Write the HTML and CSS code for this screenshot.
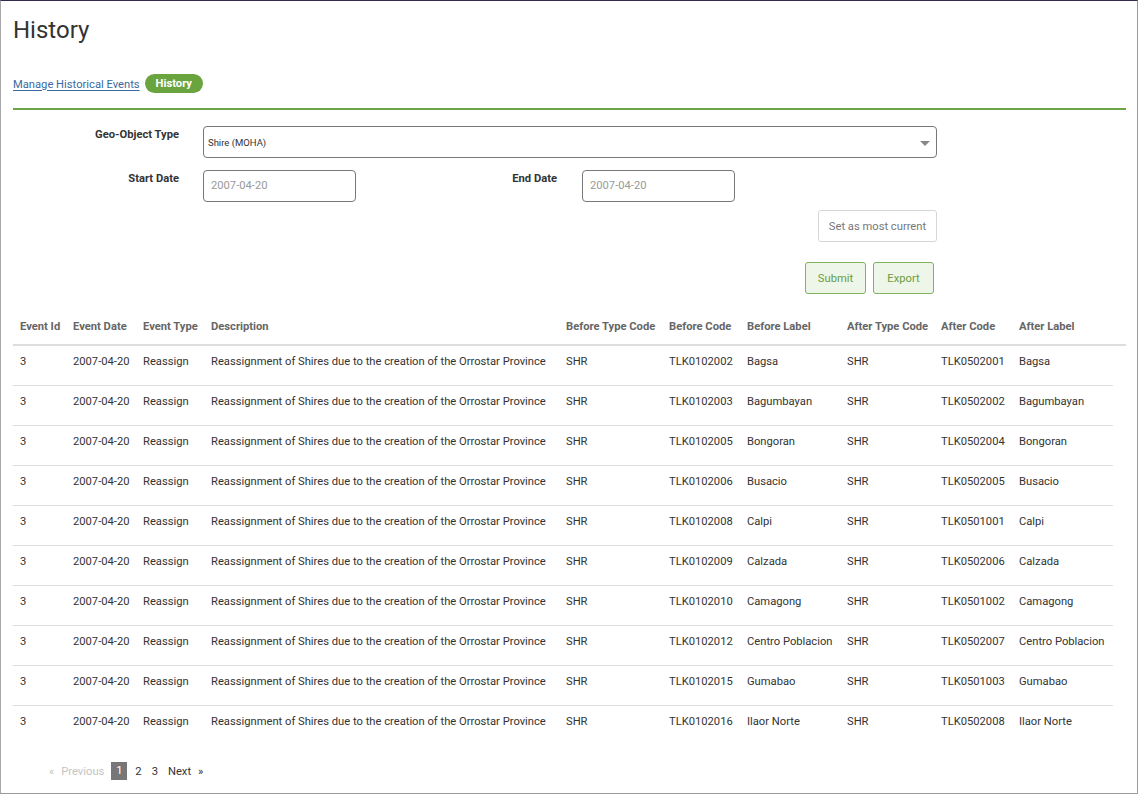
FILE: index.html
```html
<!DOCTYPE html>
<html>
<head>
<meta charset="utf-8">
<link rel="stylesheet" href="styles.css">
</head>
<body>
<div class="window">
  <h1 class="title">History</h1>
  <div class="crumbs">
    <a class="crumb-link" href="#">Manage Historical Events</a>
    <span class="pill">History</span>
  </div>
  <div class="rule"></div>

  <div class="form">
    <div class="row">
      <label class="lbl lbl-main">Geo-Object Type</label>
      <div class="select">
        <span class="select-text">Shire (MOHA)</span>
        <span class="caret"></span>
      </div>
    </div>
    <div class="row row-dates">
      <label class="lbl lbl-main lbl-date">Start Date</label>
      <div class="input">2007-04-20</div>
      <label class="lbl lbl-end lbl-date">End Date</label>
      <div class="input">2007-04-20</div>
    </div>
    <div class="row row-right row-current">
      <button class="btn-current">Set as most current</button>
    </div>
    <div class="row row-right row-actions">
      <button class="btn-green">Submit</button>
      <button class="btn-green">Export</button>
    </div>
  </div>

  <div class="table-wrap">
    <div class="head-rule"></div>
    <table class="grid">
      <colgroup>
        <col style="width:53px"><col style="width:70px"><col style="width:68px"><col style="width:355px"><col style="width:103px"><col style="width:78px"><col style="width:100px"><col style="width:94px"><col style="width:78px"><col style="width:101px">
      </colgroup>
      <thead>
        <tr><th>Event Id</th><th>Event Date</th><th>Event Type</th><th>Description</th><th>Before Type Code</th><th>Before Code</th><th>Before Label</th><th>After Type Code</th><th>After Code</th><th>After Label</th></tr>
      </thead>
      <tbody>
        <tr><td>3</td><td>2007-04-20</td><td>Reassign</td><td>Reassignment of Shires due to the creation of the Orrostar Province</td><td>SHR</td><td>TLK0102002</td><td>Bagsa</td><td>SHR</td><td>TLK0502001</td><td>Bagsa</td></tr>
        <tr><td>3</td><td>2007-04-20</td><td>Reassign</td><td>Reassignment of Shires due to the creation of the Orrostar Province</td><td>SHR</td><td>TLK0102003</td><td>Bagumbayan</td><td>SHR</td><td>TLK0502002</td><td>Bagumbayan</td></tr>
        <tr><td>3</td><td>2007-04-20</td><td>Reassign</td><td>Reassignment of Shires due to the creation of the Orrostar Province</td><td>SHR</td><td>TLK0102005</td><td>Bongoran</td><td>SHR</td><td>TLK0502004</td><td>Bongoran</td></tr>
        <tr><td>3</td><td>2007-04-20</td><td>Reassign</td><td>Reassignment of Shires due to the creation of the Orrostar Province</td><td>SHR</td><td>TLK0102006</td><td>Busacio</td><td>SHR</td><td>TLK0502005</td><td>Busacio</td></tr>
        <tr><td>3</td><td>2007-04-20</td><td>Reassign</td><td>Reassignment of Shires due to the creation of the Orrostar Province</td><td>SHR</td><td>TLK0102008</td><td>Calpi</td><td>SHR</td><td>TLK0501001</td><td>Calpi</td></tr>
        <tr><td>3</td><td>2007-04-20</td><td>Reassign</td><td>Reassignment of Shires due to the creation of the Orrostar Province</td><td>SHR</td><td>TLK0102009</td><td>Calzada</td><td>SHR</td><td>TLK0502006</td><td>Calzada</td></tr>
        <tr><td>3</td><td>2007-04-20</td><td>Reassign</td><td>Reassignment of Shires due to the creation of the Orrostar Province</td><td>SHR</td><td>TLK0102010</td><td>Camagong</td><td>SHR</td><td>TLK0501002</td><td>Camagong</td></tr>
        <tr><td>3</td><td>2007-04-20</td><td>Reassign</td><td>Reassignment of Shires due to the creation of the Orrostar Province</td><td>SHR</td><td>TLK0102012</td><td>Centro Poblacion</td><td>SHR</td><td>TLK0502007</td><td>Centro Poblacion</td></tr>
        <tr><td>3</td><td>2007-04-20</td><td>Reassign</td><td>Reassignment of Shires due to the creation of the Orrostar Province</td><td>SHR</td><td>TLK0102015</td><td>Gumabao</td><td>SHR</td><td>TLK0501003</td><td>Gumabao</td></tr>
        <tr class="last"><td>3</td><td>2007-04-20</td><td>Reassign</td><td>Reassignment of Shires due to the creation of the Orrostar Province</td><td>SHR</td><td>TLK0102016</td><td>Ilaor Norte</td><td>SHR</td><td>TLK0502008</td><td>Ilaor Norte</td></tr>
      </tbody>
    </table>
  </div>

  <div class="pager">
    <span class="pg-disabled">«</span>
    <span class="pg-disabled pg-prev">Previous</span>
    <span class="pg-current">1</span>
    <span class="pg">2</span>
    <span class="pg">3</span>
    <span class="pg pg-next">Next</span>
    <span class="pg">»</span>
  </div>
</div>
</body>
</html>
```

FILE: styles.css
```css
html, body {
  margin: 0;
  padding: 0;
  background: #ffffff;
}
body {
  font-family: Roboto, "Liberation Sans", Arial, sans-serif;
  color: #333333;
  font-size: 11.2px;
}
.window {
  box-sizing: border-box;
  width: 1138px;
  height: 794px;
  border-top: 1px solid #35294f;
  border-left: 1px solid #a8a8a8;
  border-right: 1px solid #9a9a9a;
  border-bottom: 1px solid #9a9a9a;
  padding: 0 12px;
  overflow: hidden;
}
.title {
  margin: 14px 0 0 0;
  font-size: 24px;
  font-weight: 400;
  line-height: 30px;
  color: #333333;
}
.crumbs {
  display: flex;
  align-items: center;
  gap: 5px;
  margin-top: 28px;
  height: 20px;
}
.crumb-link {
  color: #3b6aa0;
  font-size: 11.2px;
  text-decoration: underline;
  text-underline-offset: 2px;
  padding-top: 2px;
}
.pill {
  display: inline-block;
  background: #6aa43f;
  color: #ffffff;
  font-weight: 700;
  font-size: 11.2px;
  line-height: 19px;
  height: 19px;
  padding: 0 11px;
  border-radius: 10px;
}
.rule {
  height: 2px;
  background: #6ba544;
  margin-top: 15px;
  width: 1113px;
}
.form {
  margin-top: 16px;
  width: 924px;
}
.row {
  display: flex;
  align-items: flex-start;
}
.lbl {
  font-weight: 700;
  font-size: 11.2px;
  color: #333333;
  text-align: right;
  box-sizing: border-box;
  line-height: 14px;
  padding-top: 2px;
}
.lbl-main {
  width: 166px;
  margin-right: 24px;
}
.lbl-end {
  width: 201px;
  margin-right: 25px;
}
.select {
  box-sizing: border-box;
  width: 734px;
  height: 32px;
  border: 1px solid #777777;
  border-radius: 4px;
  display: flex;
  align-items: center;
  justify-content: space-between;
  padding: 0 6px 0 4px;
}
.select-text {
  font-size: 9.5px;
  color: #333333;
}
.caret {
  width: 0;
  height: 0;
  border-left: 5px solid transparent;
  border-right: 5px solid transparent;
  border-top: 5px solid #888888;
  margin-top: 2px;
}
.row-dates {
  margin-top: 12px;
}
.input {
  box-sizing: border-box;
  width: 153px;
  height: 32px;
  border: 1px solid #777777;
  border-radius: 4px;
  padding: 0 7px;
  line-height: 30px;
  font-size: 11.2px;
  color: #999999;
}
.row-right {
  justify-content: flex-end;
}
.row-current {
  margin-top: 8px;
}
.btn-current {
  box-sizing: border-box;
  height: 32px;
  width: 119px;
  background: #ffffff;
  border: 1px solid #d6d6d6;
  border-radius: 3px;
  font-family: Roboto, "Liberation Sans", Arial, sans-serif;
  font-size: 11.2px;
  color: #777777;
  padding: 0;
}
.row-actions {
  margin-top: 20px;
  gap: 7px;
  padding-right: 3px;
}
.btn-green {
  box-sizing: border-box;
  height: 32px;
  width: 61px;
  background: #eef6e9;
  border: 1px solid #7fb35c;
  border-radius: 3px;
  font-family: Roboto, "Liberation Sans", Arial, sans-serif;
  font-size: 11.2px;
  color: #6a9c40;
  padding: 0;
}
.table-wrap {
  position: relative;
  margin-top: 17px;
  width: 1113px;
}
.head-rule {
  position: absolute;
  left: 0;
  right: 0;
  top: 33px;
  height: 2px;
  background: #dddddd;
}
.grid {
  position: relative;
  border-collapse: collapse;
  table-layout: fixed;
  width: 1100px;
}
.grid th {
  text-align: left;
  font-weight: 700;
  font-size: 11.2px;
  color: #666666;
  line-height: 14px;
  padding: 9px 7px 10px 7px;
  border-bottom: 2px solid #dddddd;
  white-space: nowrap;
}
.grid td {
  font-size: 11.2px;
  color: #333333;
  line-height: 14px;
  padding: 9px 7px 16px 7px;
  border-bottom: 1px solid #dddddd;
  white-space: nowrap;
}
.grid tr.last td {
  border-bottom: none;
}
.pager {
  display: flex;
  align-items: center;
  margin-top: 17px;
  padding-left: 36px;
  height: 18px;
  font-size: 11.2px;
}
.pg-disabled {
  color: #c4c4c4;
  margin-right: 7px;
}
.pg-prev {
  margin-right: 7px;
}
.pg-current {
  background: #777777;
  color: #ffffff;
  width: 16px;
  height: 18px;
  line-height: 18px;
  text-align: center;
  margin-right: 8px;
}
.pg {
  color: #333333;
  margin-right: 10px;
}
.pg-next {
  margin-right: 7px;
}
```
